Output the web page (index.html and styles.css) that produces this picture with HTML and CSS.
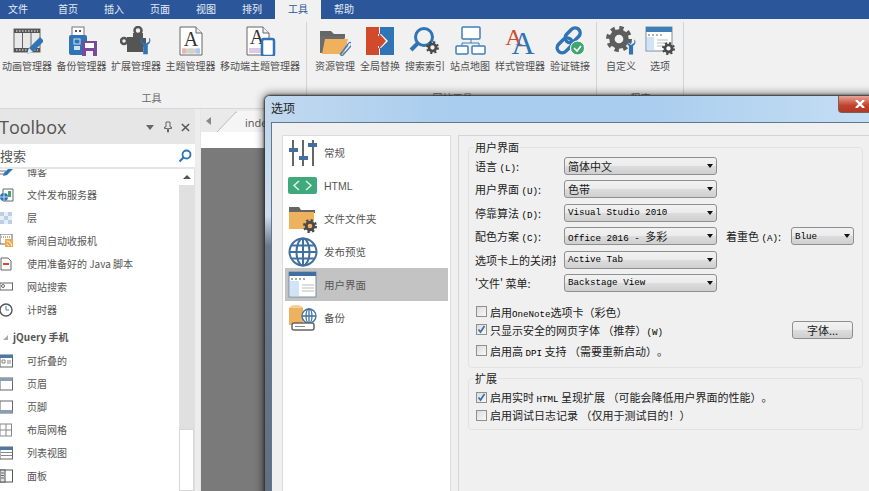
FILE: index.html
```html
<!DOCTYPE html>
<html lang="zh">
<head>
<meta charset="utf-8">
<title>选项</title>
<link rel="stylesheet" href="styles.css">
</head>
<body>
<svg class="defs" width="0" height="0">
  <symbol id="gear" viewBox="0 0 24 24">
    <circle cx="12" cy="12" r="6.5" fill="none" stroke="currentColor" stroke-width="5"/>
    <circle cx="12" cy="12" r="10" fill="none" stroke="currentColor" stroke-width="4" stroke-dasharray="3.9 3.95"/>
  </symbol>
  <symbol id="wrench" viewBox="0 0 12 20">
    <path d="M2 1v4l4 2.500 4-2.500V1c2 1 2 6-1.500 7.500V19H3.500V8.500C0 7 0 2 2 1z" fill="currentColor"/>
  </symbol>
</svg>
<div class="app">
  <nav class="menu">
    <span class="menu-item menu-first">文件</span>
    <span class="menu-item">首页</span>
    <span class="menu-item">插入</span>
    <span class="menu-item">页面</span>
    <span class="menu-item">视图</span>
    <span class="menu-item">排列</span>
    <span class="menu-item menu-active">工具</span>
    <span class="menu-item">帮助</span>
  </nav>

  <section class="ribbon">
    <div class="rgroup rgroup-a">
      <div class="ritems">
        <div class="ritem w50">
          <svg class="ricon" viewBox="-2 0 32 30"><rect x="1" y="3" width="26" height="23" fill="#e9e9e9" stroke="#666"/><rect x="1" y="3" width="26" height="4" fill="#555"/><rect x="1" y="22" width="26" height="4" fill="#555"/><path d="M9.500 7v15M18 7v15" stroke="#666"/><path d="M3 5h22M3 24h22" stroke="#fff" stroke-dasharray="1.500 1.500"/><path d="M14 28l2-6 11-11 4 4-11 11z" fill="#2f74b5"/><path d="M14 28l2-6 4 4z" fill="#dfe8f0"/></svg>
          <span class="rlabel">动画管理器</span>
        </div>
        <div class="ritem w50">
          <svg class="ricon" viewBox="0 0 32 30"><rect x="6" y="1" width="12" height="9" fill="#fff" stroke="#777"/><rect x="9" y="4" width="2" height="2" fill="#555"/><rect x="13" y="4" width="2" height="2" fill="#555"/><rect x="3" y="9" width="18" height="20" rx="2" fill="#2f74b5"/><rect x="8" y="13" width="6" height="5" fill="none" stroke="#cfe0f0"/><rect x="8" y="20" width="6" height="4" fill="#cfe0f0"/><rect x="16" y="15" width="15" height="15" fill="#7a4a9a"/><rect x="19" y="17" width="9" height="5" fill="#fff"/><rect x="20" y="25" width="7" height="5" fill="#f2eef6"/></svg>
          <span class="rlabel">备份管理器</span>
        </div>
        <div class="ritem w50">
          <svg class="ricon" viewBox="0 0 32 30"><circle cx="18" cy="4.500" r="3.500" fill="none" stroke="#555" stroke-width="2.500"/><circle cx="4" cy="15" r="3" fill="none" stroke="#555" stroke-width="2.500"/><path d="M7 11h6V7h10v5h3v9h-3v5H7z" fill="#555"/><use href="#wrench" x="20" y="10" width="11" height="20" class="blue"/></svg>
          <span class="rlabel">扩展管理器</span>
        </div>
        <div class="ritem w50">
          <svg class="ricon" viewBox="0 0 32 30"><path d="M5 1h16l6 6v22H5z" fill="#fff" stroke="#666"/><path d="M21 1v6h6" fill="#eee" stroke="#666"/><text x="16" y="20" class="svg-a">A</text><path d="M7 22.500h18v5H7z" fill="#dcc9e5"/><path d="M7 22.500h4v5H7z" fill="#e9b8ad"/><path d="M14 22.500h4v5h-4z" fill="#c9dcb0"/><path d="M21 22.500h4v5h-4z" fill="#a9cbe8"/></svg>
          <span class="rlabel">主题管理器</span>
        </div>
        <div class="ritem w80">
          <svg class="ricon" viewBox="0 0 32 30"><path d="M3 1h16l6 6v22H3z" fill="#fff" stroke="#666"/><path d="M19 1v6h6" fill="#eee" stroke="#666"/><text x="13" y="18" class="svg-a">A</text><path d="M5 22h12v5H5z" fill="#dcc9e5"/><rect x="18" y="13" width="12" height="17" rx="2" fill="#fff" stroke="#2f74b5" stroke-width="2.500"/></svg>
          <span class="rlabel">移动端主题管理器</span>
        </div>
      </div>
      <div class="rgroup-title">工具</div>
    </div>

    <div class="rgroup rgroup-b">
      <div class="ritems ritems-b">
        <div class="ritem w40">
          <svg class="ricon" viewBox="0 0 32 30"><path d="M1 5h11l3 3h11v4H1z" fill="#666"/><path d="M1 10v17h22l3-17z" fill="#6b6b6b"/><path d="M3 28l3-15h23l-4 15z" fill="#efb15d"/><path d="M21 29l8-11c2-3 5-1 3 2l-8 9c-1 1-3 0-2-2l7-8" fill="none" stroke="#3f7fb8" stroke-width="1.300"/></svg>
          <span class="rlabel">资源管理</span>
        </div>
        <div class="ritem w40">
          <svg class="ricon" viewBox="0 0 32 30"><rect x="2" y="1" width="13" height="28" fill="#d24a2c"/><rect x="16" y="1" width="14" height="28" fill="#2f74b5"/><path d="M14 8h3l7 7-7 7h-3z" fill="#fff"/><path d="M10 10h5V7l7 8-7 8v-3h-5z" fill="#d24a2c"/></svg>
          <span class="rlabel">全局替换</span>
        </div>
        <div class="ritem w40">
          <svg class="ricon" viewBox="0 0 32 30"><circle cx="15" cy="11" r="8.500" fill="none" stroke="#2f74b5" stroke-width="3"/><path d="M9 17l-7 7" stroke="#2f74b5" stroke-width="4"/><use href="#gear" x="17" y="15" width="13" height="13" class="dgray"/></svg>
          <span class="rlabel">搜索索引</span>
        </div>
        <div class="ritem w40">
          <svg class="ricon" viewBox="0 0 32 30"><g fill="#fff" stroke="#3f7fb8" stroke-width="1.500"><rect x="8" y="1" width="18" height="12" rx="1"/><rect x="2" y="20" width="12" height="8" rx="1"/><rect x="18" y="20" width="13" height="8" rx="1"/></g><path d="M17 13v4M8 20v-3h17v3" fill="none" stroke="#3f7fb8"/></svg>
          <span class="rlabel">站点地图</span>
        </div>
        <div class="ritem w50">
          <svg class="ricon" viewBox="0 0 32 30"><text x="10" y="19" class="svg-aa-red">A</text><text x="19" y="28" class="svg-aa-blue">A</text></svg>
          <span class="rlabel">样式管理器</span>
        </div>
        <div class="ritem w40">
          <svg class="ricon" viewBox="0 0 32 30"><g fill="none" stroke="#2f74b5" stroke-width="3.500"><rect x="14" y="1" width="10" height="17" rx="5" transform="rotate(45 19 9)"/><rect x="6" y="11" width="10" height="17" rx="5" transform="rotate(45 11 19)"/></g><circle cx="23.500" cy="22" r="7" fill="#3fa66f" stroke="#fff"/><path d="M20 22l3 3 4-5" fill="none" stroke="#fff" stroke-width="1.600"/></svg>
          <span class="rlabel">验证链接</span>
        </div>
      </div>
      <div class="rgroup-title">网站工具</div>
    </div>

    <div class="rgroup rgroup-c">
      <div class="ritems ritems-c">
        <div class="ritem w30">
          <svg class="ricon" viewBox="0 0 32 30"><use href="#gear" x="1" y="0" width="26" height="26" class="mgray"/><use href="#wrench" x="21" y="12" width="10" height="18" class="blue"/></svg>
          <span class="rlabel">自定义</span>
        </div>
        <div class="ritem w30">
          <svg class="ricon" viewBox="0 0 32 30"><rect x="2" y="1" width="26" height="24" fill="#fff" stroke="#7a8ea3"/><rect x="2" y="1" width="26" height="5" fill="#3f7fb8"/><path d="M4 9h2M8 9h2M12 9h2M16 9h2" stroke="#666"/><rect x="3" y="11" width="7" height="13" fill="#cfe5f7"/><path d="M13 14h11M13 17h11M13 20h6" stroke="#bbb"/><use href="#gear" x="18" y="16" width="13" height="13" class="dgray"/></svg>
          <span class="rlabel">选项</span>
        </div>
      </div>
      <div class="rgroup-title">程序</div>
    </div>
  </section>

  <div class="work">
    <aside class="toolbox">
      <header class="tb-head">
        <h2 class="tb-title">Toolbox</h2>
        <div class="tb-tools">
          <span class="tb-caret"></span>
          <svg class="tb-pin" viewBox="0 0 10 12"><path d="M3 1h4v5h1.500v1.500H5.500V11h-1V7.500h-3V6H3z" fill="none" stroke="#666"/></svg>
          <svg class="tb-close" viewBox="0 0 10 10"><path d="M1 1l8 8M9 1l-8 8" stroke="#555" stroke-width="1.600"/></svg>
        </div>
      </header>
      <div class="tb-search">
        <span class="tb-search-text">搜索</span>
        <svg class="tb-mag" viewBox="0 0 14 14"><circle cx="8.500" cy="5.500" r="4" fill="none" stroke="#2f74b5" stroke-width="1.800"/><path d="M5.500 8.500L1.500 12.500" stroke="#2f74b5" stroke-width="2.200"/></svg>
      </div>
      <div class="tb-body">
        <div class="tb-list">
          <div class="tb-scrolled">
            <div class="tb-row"><svg class="tb-icon" viewBox="0 0 14 14"><path d="M0 6h6M0 9h4" stroke="#777"/><path d="M3 11l1-3 6-6 3 2-6 6z" fill="#2f74b5"/></svg><span>博客</span></div>
            <div class="tb-row"><svg class="tb-icon" viewBox="0 0 14 14"><path d="M3 1h10v12H3z" fill="#fff" stroke="#666"/><circle cx="4" cy="9" r="4" fill="#2f74b5"/><path d="M0 9h8M4 5v8" stroke="#fff" stroke-width=".7"/><rect x="8" y="3" width="3" height="6" fill="#3fa66f"/></svg><span>文件发布服务器</span></div>
            <div class="tb-row"><svg class="tb-icon" viewBox="0 0 14 14"><path d="M0 1h4v4H0zM8 1h4v4H8zM4 5h4v4H4zM0 9h4v4H0zM8 9h4v4H8z" fill="#bccfe4"/><path d="M4 1h4v4H4zM0 5h4v4H0zM8 5h4v4H8zM4 9h4v4H4z" fill="#e8eef5"/></svg><span>层</span></div>
            <div class="tb-row"><svg class="tb-icon" viewBox="0 0 14 14"><rect x="0" y="0" width="12" height="10" fill="#fff" stroke="#666"/><path d="M1 3h10" stroke="#666" stroke-dasharray="1 1"/><rect x="5" y="5" width="8" height="8" fill="#eda84a"/><path d="M6.500 7c3 0 5 2 5 5M6.500 10c1 0 2 1 2 2" fill="none" stroke="#fff"/></svg><span>新闻自动收报机</span></div>
            <div class="tb-row"><svg class="tb-icon" viewBox="0 0 14 14"><path d="M1 1h7l3 3v9H1z" fill="#fff" stroke="#666"/><path d="M3 7h6" stroke="#d24a2c" stroke-width="2"/></svg><span>使用准备好的 Java 脚本</span></div>
            <div class="tb-row"><svg class="tb-icon" viewBox="0 0 14 14"><rect x="0" y="3" width="12.500" height="7" fill="#fff" stroke="#666"/><circle cx="3" cy="6" r="1.500" fill="none" stroke="#666"/></svg><span>网站搜索</span></div>
            <div class="tb-row"><svg class="tb-icon" viewBox="0 0 14 14"><circle cx="6" cy="7" r="6" fill="#fff" stroke="#555" stroke-width="1.400"/><path d="M6 3v4h3" fill="none" stroke="#3f7fb8"/></svg><span>计时器</span></div>
            <div class="tb-cat"><span class="tb-cat-arrow"></span><span>jQuery 手机</span></div>
            <div class="tb-row"><svg class="tb-icon" viewBox="0 0 14 14"><rect x="0" y="1" width="12.500" height="12" fill="#fff" stroke="#666"/><rect x="0" y="1" width="12.500" height="3" fill="#4a79a8"/><path d="M2 6h3v3H2zM7 7h4M7 9h4" fill="none" stroke="#888"/></svg><span>可折叠的</span></div>
            <div class="tb-row"><svg class="tb-icon" viewBox="0 0 14 14"><rect x="0" y="1" width="12.500" height="12" fill="#fff" stroke="#666"/><rect x="0" y="1" width="12.500" height="3" fill="#8b9db2"/></svg><span>页眉</span></div>
            <div class="tb-row"><svg class="tb-icon" viewBox="0 0 14 14"><rect x="0" y="1" width="12.500" height="12" fill="#fff" stroke="#666"/><rect x="0" y="10" width="12.500" height="3" fill="#8b9db2"/></svg><span>页脚</span></div>
            <div class="tb-row"><svg class="tb-icon" viewBox="0 0 14 14"><rect x="0" y="1" width="11.500" height="12" fill="#fff" stroke="#888"/><path d="M6 1v12M0 7h12" stroke="#888"/></svg><span>布局网格</span></div>
            <div class="tb-row"><svg class="tb-icon" viewBox="0 0 14 14"><rect x="0" y="1" width="12.500" height="12" fill="#fff" stroke="#666"/><rect x="0" y="1" width="12.500" height="3" fill="#4a79a8"/><path d="M1 6.500h11M1 9.500h11" stroke="#888"/></svg><span>列表视图</span></div>
            <div class="tb-row"><svg class="tb-icon" viewBox="0 0 14 14"><rect x="0" y="1" width="12.500" height="12" fill="#fff" stroke="#555"/><rect x="0" y="1" width="5" height="12" fill="#dbe3ec" stroke="#555"/><path d="M1 4h3M1 6.500h3M1 9h3" stroke="#666"/></svg><span>面板</span></div>
          </div>
        </div>
        <div class="tb-scroll">
          <div class="tb-up"></div>
          <div class="tb-track"></div>
          <div class="tb-thumb"></div>
        </div>
      </div>
    </aside>
    <main class="doc">
      <div class="doc-tabs">
        <span class="doc-left"></span>
        <svg class="doc-tab-edge" viewBox="0 0 20 21"><path d="M0 21L19 1h1v20z" fill="#f5f5f5"/><path d="M0 21L19 1h1" fill="none" stroke="#bbb"/></svg>
        <span class="doc-tab">index.html</span>
      </div>
      <div class="doc-strip"></div>
      <div class="doc-canvas"></div>
    </main>
  </div>

  <div class="dialog">
    <div class="dlg-title">
      <span class="dlg-caption">选项</span>
      <span class="dlg-close"><svg class="dlg-x" viewBox="0 0 10 8"><path d="M1 0l8 8M9 0L1 8" stroke="#fff" stroke-width="2.400"/></svg></span>
    </div>
    <div class="dlg-client">
      <ul class="nav">
        <li class="nav-item">
          <svg class="nav-icon" viewBox="0 0 30 28"><path d="M5 1v26M15 1v26M25 1v26" stroke="#666" stroke-width="2"/><rect x="1" y="9" width="9" height="4" fill="#3f70a0"/><rect x="11" y="17" width="9" height="4" fill="#3f70a0"/><rect x="20" y="4" width="9" height="4" fill="#3f70a0"/></svg>
          <span>常规</span>
        </li>
        <li class="nav-item">
          <svg class="nav-icon" viewBox="0 0 30 28"><rect x="0" y="5" width="29" height="17" rx="2" fill="#3fa97c"/><path d="M11 9l-5 4.500 5 4.500M18 9l5 4.500-5 4.500" fill="none" stroke="#dff3ea" stroke-width="1.500"/></svg>
          <span class="nav-latin">HTML</span>
        </li>
        <li class="nav-item">
          <svg class="nav-icon" viewBox="0 0 30 28"><path d="M1 2h10l2 3h14v3H1z" fill="#666"/><rect x="1" y="7" width="25" height="17" fill="#edb25d"/><use href="#gear" x="15" y="14" width="14" height="14" class="dgray"/></svg>
          <span>文件文件夹</span>
        </li>
        <li class="nav-item">
          <svg class="nav-icon" viewBox="0 0 30 30"><g fill="none" stroke="#3f70a0" stroke-width="2"><circle cx="15" cy="15" r="13.500"/><ellipse cx="15" cy="15" rx="6.500" ry="13.500"/><path d="M15 1.500v27M1.500 15h27M3.500 8.500h23M3.500 21.500h23"/></g></svg>
          <span>发布预览</span>
        </li>
        <li class="nav-item nav-selected">
          <svg class="nav-icon" viewBox="0 0 30 28"><rect x="1" y="1" width="27" height="25" fill="#fff" stroke="#7a8ea3"/><rect x="1" y="1" width="27" height="4" fill="#3f70a0"/><path d="M3 8h2M7 8h2M11 8h2M15 8h2" stroke="#555"/><rect x="2" y="10" width="9" height="15" fill="#cfe5f7"/><path d="M14 14h12M14 17h12M14 20h12" stroke="#bbb"/></svg>
          <span>用户界面</span>
        </li>
        <li class="nav-item">
          <svg class="nav-icon" viewBox="0 0 30 28"><ellipse cx="8" cy="4" rx="7" ry="3" fill="#f3cf96"/><path d="M1 4v17h14V4z" fill="#edb25d"/><g fill="#fff" stroke="#3f70a0" stroke-width="1.300"><circle cx="21" cy="12" r="7"/><ellipse cx="21" cy="12" rx="3" ry="7"/><path d="M14 12h14M21 5v14" fill="none"/></g><rect x="4" y="19" width="22" height="7" rx="2" fill="#fff" stroke="#666" stroke-width="1.500"/><path d="M7 22.500h10" stroke="#888"/></svg>
          <span>备份</span>
        </li>
      </ul>

      <div class="panel">
        <fieldset class="group group-ui">
          <legend class="legend">用户界面</legend>
          <div class="form">
            <div class="frow"><label class="flabel">语言 <span class="m">(L)</span>:</label><div class="sel">简体中文</div></div>
            <div class="frow"><label class="flabel">用户界面 <span class="m">(U)</span>:</label><div class="sel">色带</div></div>
            <div class="frow"><label class="flabel">停靠算法 <span class="m">(D)</span>:</label><div class="sel"><span class="m">Visual Studio 2010</span></div></div>
            <div class="frow"><label class="flabel">配色方案 <span class="m">(C)</span>:</label><div class="sel"><span><span class="m">Office 2016 - </span>多彩</span></div><label class="flabel-2">着重色 <span class="m">(A)</span>:</label><div class="sel sel-small"><span class="m">Blue</span></div></div>
            <div class="frow"><label class="flabel">选项卡上的关闭按钮</label><div class="sel"><span class="m">Active Tab</span></div></div>
            <div class="frow"><label class="flabel">'文件' 菜单:</label><div class="sel"><span class="m">Backstage View</span></div></div>
          </div>
          <div class="checks-wrap">
            <div class="checks">
              <div class="check"><span class="box"></span><span>启用<span class="m">OneNote</span>选项卡（彩色）</span></div>
              <div class="check"><span class="box box-on"><svg class="tick" viewBox="0 0 9 9"><path d="M1.500 4.500l2 2.500 4-6" fill="none" stroke="#3a6ea5" stroke-width="1.700"/></svg></span><span>只显示安全的网页字体 （推荐）<span class="m">(W)</span></span></div>
              <div class="check check-gap"><span class="box"></span><span>启用高 <span class="m">DPI</span> 支持 （需要重新启动）。</span></div>
            </div>
            <button class="btn">字体...</button>
          </div>
        </fieldset>
        <fieldset class="group group-ext">
          <legend class="legend">扩展</legend>
          <div class="check"><span class="box box-on"><svg class="tick" viewBox="0 0 9 9"><path d="M1.500 4.500l2 2.500 4-6" fill="none" stroke="#3a6ea5" stroke-width="1.700"/></svg></span><span>启用实时 <span class="m">HTML</span> 呈现扩展 （可能会降低用户界面的性能）。</span></div>
          <div class="check"><span class="box"></span><span>启用调试日志记录 （仅用于测试目的！）</span></div>
        </fieldset>
      </div>
    </div>
  </div>
</div>
</body>
</html>
```
FILE: styles.css
```css
* { box-sizing: border-box; }
html, body { margin: 0; height: 100%; overflow: hidden; }
body { font-family: "Noto Sans CJK SC", "Liberation Sans", sans-serif; font-size: 10px; color: #555; background: #f1f1f1; text-spacing-trim: space-all; }
.defs { position: absolute; }
.blue { color: #2f74b5; }
.dgray { color: #4a4a4a; }
.mgray { color: #5e5e5e; }
.m { font-family: "Liberation Mono", monospace; font-size: 9.200px; color: #000; }
.svg-a { font-family: "Liberation Serif", serif; font-size: 20px; fill: #333; text-anchor: middle; }
.svg-aa-red { font-family: "Liberation Serif", serif; font-size: 24px; fill: #d24a2c; text-anchor: middle; }
.svg-aa-blue { font-family: "Liberation Serif", serif; font-size: 32px; fill: #2f74b5; text-anchor: middle; }

.app { width: 869px; height: 491px; display: flex; flex-direction: column; position: relative; overflow: hidden; }

/* menu */
.menu { height: 19px; flex: none; display: flex; background: #2b579a; }
.menu-item { padding: 0 13px; line-height: 18px; color: #e6ecf5; }
.menu-first { padding: 0 17px 0 8px; }
.menu-active { background: #f1f1f1; color: #2b579a; }

/* ribbon */
.ribbon { height: 90px; flex: none; display: flex; background: #f1f1f1; border-bottom: 1px solid #d8d8d8; }
.rgroup { display: flex; flex-direction: column; margin-top: 3px; border-right: 1px solid #d4d4d4; margin-bottom: 3px; }
.rgroup-a { padding: 0 5px 0 2px; width: 307px; }
.rgroup-b { padding: 0 6px 0 8px; width: 290px; }
.rgroup-c { padding: 0 8px 0 9px; width: 87px; }
.ritems { display: flex; gap: 4.500px; }
.ritems-b { gap: 5px; }
.ritems-c { gap: 9px; }
.ritem { display: flex; flex-direction: column; align-items: center; color: #4f4f4f; }
.w30 { width: 30px; }
.w40 { width: 40px; }
.w50 { width: 50px; }
.w80 { width: 80px; }
.ricon { width: 32px; height: 30px; margin-top: 4px; display: block; }
.rlabel { margin-top: 3px; line-height: 14px; white-space: nowrap; }
.rgroup-title { margin-top: auto; height: 14px; line-height: 14px; text-align: center; color: #666; }

/* toolbox */
.work { flex: 1; display: flex; min-height: 0; }
.toolbox { width: 195px; flex: none; display: flex; flex-direction: column; background: #e6e6e6; }
.tb-head { height: 34px; flex: none; display: flex; align-items: center; justify-content: space-between; padding-right: 5px; margin-top: 1px; }
.tb-title { margin: 0 0 0 -1px; font-family: "Open Sans", sans-serif; font-size: 18px; font-weight: 400; color: #555; }
.tb-tools { display: flex; align-items: center; gap: 7px; }
.tb-caret { width: 0; height: 0; border: 4px solid transparent; border-top: 5px solid #666; border-bottom: 0; margin-right: 2px; }
.tb-pin { width: 10px; height: 12px; }
.tb-close { width: 9px; height: 9px; margin-left: 1px; }
.tb-search { height: 23px; flex: none; background: #fff; display: flex; align-items: center; justify-content: space-between; padding-right: 3px; }
.tb-search-text { font-size: 13px; color: #555; }
.tb-mag { width: 14px; height: 14px; }
.tb-body { flex: 1; min-height: 0; display: flex; margin-top: 2px; background: #fff; }
.tb-list { flex: 1; overflow: hidden; }
.tb-scrolled { margin-top: -9px; }
.tb-row { height: 23px; display: flex; align-items: center; gap: 13px; color: #555; white-space: nowrap; }
.tb-icon { width: 14px; height: 14px; flex: none; }
.tb-cat { height: 28px; display: flex; align-items: center; gap: 5px; padding: 3px 0 0 3px; font-weight: 700; color: #555; font-size: 10px; }
.tb-cat-arrow { width: 0; height: 0; border-left: 5px solid transparent; border-bottom: 5px solid #aaa; margin-top: 2px; }
.tb-scroll { width: 16px; flex: none; display: flex; flex-direction: column; background: #e0e0e0; padding-right: 1px; }
.tb-up { height: 16px; flex: none; background: #fff; display: flex; align-items: center; justify-content: center; }
.tb-up::after { content: ""; border: 4px solid transparent; border-bottom: 4px solid #555; border-top: 0; }
.tb-track { height: 244px; flex: none; }
.tb-thumb { flex: 1; background: #fff; border: 1px solid #d6d6d6; }

/* document */
.doc { flex: 1; display: flex; flex-direction: column; background: #e6e6e6; border-left: 5px solid #ededed; padding-left: 1px; }
.doc-tabs { height: 23px; flex: none; display: flex; align-items: flex-end; background: #eaeaea; }
.doc-left { width: 0; height: 0; border: 4px solid transparent; border-right: 5px solid #888; border-left: 0; margin: 0 6px 7px 5px; }
.doc-tab-edge { width: 20px; height: 21px; display: block; }
.doc-tab { height: 21px; background: #f5f5f5; font-size: 11px; padding: 4px 0 0 8px; font-family: "Open Sans", sans-serif; color: #555; flex: 1; }
.doc-strip { height: 16px; flex: none; background: #fff; }
.doc-canvas { flex: 1; background: #7a7a7a; }

/* dialog */
.dialog { position: absolute; left: 265px; top: 96px; width: 623px; height: 420px; display: flex; flex-direction: column; border-radius: 5px 5px 0 0; padding: 0 6px; background: linear-gradient(to bottom, #bdd6ee 0, #cddded 120px, #68798a 150px, #5f6f7f 100%); box-shadow: 0 0 2px 1px #333, 0 0 9px 2px rgba(0, 0, 0, .55); }
.dlg-title { height: 26px; flex: none; display: flex; align-items: flex-start; justify-content: space-between; margin: 0 -6px; padding-left: 6px; border-radius: 5px 5px 0 0; background: linear-gradient(to right, #c2d9ef, #a9cdee 30%, #a9cdee 60%, #c7dff4); }
.dlg-caption { font-size: 12px; line-height: 24px; color: #222; }
.dlg-close { width: 44px; height: 17px; margin-right: 6px; border-radius: 0 0 4px 4px; background: linear-gradient(to bottom, #e8a49a, #c0412c 60%, #b13a28); border: 1px solid #7d5c58; border-top: 0; display: flex; align-items: center; justify-content: center; }
.dlg-x { width: 10px; height: 8px; }
.dlg-client { flex: 1; min-height: 0; display: flex; gap: 7px; align-items: stretch; padding: 12px 0 0 10px; background: #f0f0f0; border-top: 1px solid #60788c; border-left: 1px solid #60788c; }
.nav { width: 169px; flex: none; margin: 0; padding: 0 2px; list-style: none; background: #fff; border: 1px solid #dcdcdc; }
.nav-item { height: 33px; display: flex; align-items: center; gap: 6px; padding-left: 3px; font-size: 10.500px; color: #555; }
.nav-icon { width: 30px; height: 30px; flex: none; }
.nav-latin { font-family: "Liberation Sans", sans-serif; font-size: 10.500px; }
.nav-selected { background: #c3c3c3; }

.panel { flex: 1; min-width: 0; border-top: 1px solid #d4d4d4; border-left: 1px solid #d4d4d4; padding: 4px 0 0 9px; }
.group { margin: 0; width: 395px; border: 1px solid #e2e2e2; border-radius: 4px; padding: 0 6px; min-width: 0; font-size: 11px; color: #222; }
.group-ui { height: 228px; }
.group-ext { height: 59px; margin-top: 3px; padding-top: 3px; }
.legend { padding: 0 1px; margin-left: -1px; line-height: 14px; font-size: 11px; color: #222; }
.form { display: flex; flex-direction: column; gap: 5.400px; margin-top: 3px; }
.frow { display: flex; align-items: center; height: 18px; }
.flabel { width: 81px; margin-right: 8px; overflow: hidden; white-space: nowrap; flex: none; }
.flabel-2 { margin: 0 11px 0 9px; white-space: nowrap; width: 54px; }
.sel { width: 153px; height: 18px; display: flex; align-items: center; justify-content: space-between; padding: 0 3px; font-size: 11px; color: #222; border: 1px solid #8e8f8f; border-radius: 3px; background: linear-gradient(to bottom, #f2f2f2, #ebebeb 50%, #dddddd 50%, #cfcfcf); flex: none; }
.sel::after { content: ""; border: 3.500px solid transparent; border-top: 4px solid #111; border-bottom: 0; }
.sel-small { width: 63px; }
.checks-wrap { display: flex; align-items: center; justify-content: space-between; margin-top: 11px; padding-right: 3px; }
.checks { display: flex; flex-direction: column; }
.check { display: flex; align-items: center; gap: 3px; height: 18px; padding-left: 1px; white-space: nowrap; }
.check-gap { margin-top: 3px; }
.box { width: 11px; height: 11px; flex: none; border: 1px solid #8e8f8f; background: linear-gradient(135deg, #dcdcdc, #f8f8f8); display: flex; align-items: center; justify-content: center; }
.tick { width: 9px; height: 9px; }
.btn { width: 61px; height: 18px; padding: 0; margin-bottom: 3px; font-family: "Noto Sans CJK SC", sans-serif; font-size: 11px; line-height: 14px; color: #222; border: 1px solid #8e8f8f; border-radius: 3px; background: linear-gradient(to bottom, #f2f2f2, #ebebeb 50%, #dddddd 50%, #cfcfcf); }
```
